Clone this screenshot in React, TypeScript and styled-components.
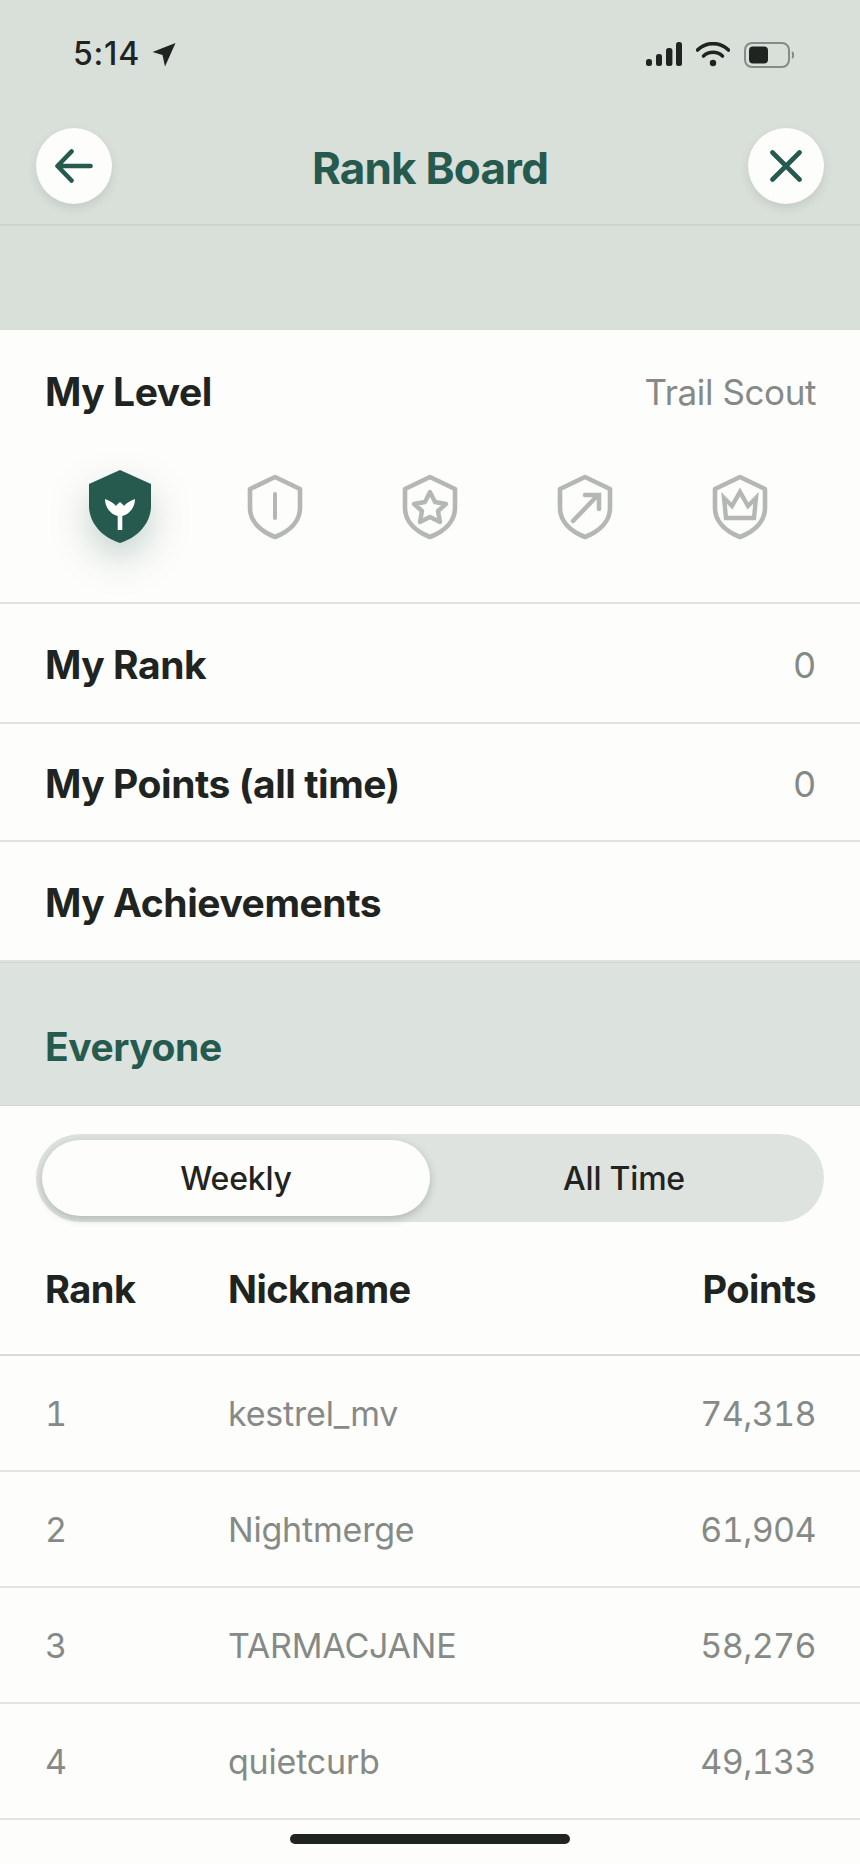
import React from "react";
import styled, { createGlobalStyle } from "styled-components";

const Global = createGlobalStyle`
  html, body { margin: 0; padding: 0; background: #fdfdfb; }
  * { box-sizing: border-box; }
  body { font-family: Inter, "Liberation Sans", sans-serif; }
`;
const Page = styled.div`
  width: 860px; height: 1864px; overflow: hidden; background: #fdfdfb; display: flex; flex-direction: column; color: #1f2421;
`;
const Top = styled.header`
  background: #d9e0da; height: 330px; flex: none;
`;
const StatusBar = styled.div`
  height: 108px; padding: 0 66px 0 73px; display: flex; justify-content: space-between; align-items: flex-start;
`;
const Time = styled.div`
  display: flex; align-items: center; gap: 12px; margin-top: 36px; font-size: 32px; line-height: 36px; font-weight: 500; letter-spacing: 0.8px;
`;
const StatusIcons = styled.div`
  display: flex; align-items: flex-start; gap: 14px; margin-top: 42px;
`;
const Nav = styled.div`
  height: 118px; padding: 20px 36px 0; display: flex; justify-content: space-between; align-items: flex-start; border-bottom: 2px solid #cdd4ce;
`;
const RoundButton = styled.button`
  width: 76px; height: 76px; border: 0; padding: 0; border-radius: 50%; background: #fdfdfc; display: flex; align-items: center; justify-content: center;
  box-shadow: 0 4px 10px rgba(40, 60, 50, 0.12);
`;
const Title = styled.h1`
  margin: 0; padding-top: 2px; font-size: 44px; line-height: 76px; font-weight: 700; letter-spacing: -0.8px; color: #265a4e;
`;
const LevelSection = styled.section`
  height: 274px; flex: none; border-bottom: 2px solid #dfe2df; padding: 0 44px 0 45px;
`;
const LevelHead = styled.div`
  height: 122px; display: flex; justify-content: space-between; align-items: center;
`;
const RowLabel = styled.div`
  font-size: 39px; font-weight: 700; letter-spacing: -0.45px;
`;
const LevelName = styled.div`
  padding-top: 2px; font-size: 35px; letter-spacing: -0.4px; color: #868a87;
`;
const Badges = styled.div`
  margin: 18px 0 0 -3px; display: flex;
`;
const Badge = styled.div`
  width: 155px; height: 74px; flex: none; display: flex; justify-content: center; align-items: center;
`;
const ActiveMark = styled.svg`
  filter: drop-shadow(0 16px 18px rgba(38, 90, 78, 0.26));
`;
const Row = styled.div<{ $h: number }>`
  height: ${(p) => p.$h}px; flex: none; padding: 3px 44px 0 45px; display: flex; justify-content: space-between; align-items: center; border-bottom: 2px solid #dfe2df;
`;
const RowValue = styled.div`
  font-size: 36px; color: #868a87;
`;
const Band = styled.div`
  height: 144px; flex: none; background: #dce2dd; display: flex; align-items: center; padding: 24px 45px 0; border-top: 1px solid #cfd5d0; border-bottom: 1px solid #cfd5d0;
`;
const BandTitle = styled.h2`
  margin: 0; font-size: 39px; font-weight: 700; letter-spacing: -0.45px; color: #265a4e;
`;
const ToggleWrap = styled.div`
  padding: 28px 36px 0; flex: none;
`;
const Toggle = styled.div`
  height: 88px; border-radius: 44px; background: #dfe3e0; padding: 6px; display: flex;
`;
const ToggleItem = styled.div<{ $on?: boolean }>`
  width: 388px; height: 76px; border-radius: 38px; flex: none; display: flex; align-items: center; justify-content: center;
  font-size: 32px; font-weight: 500; letter-spacing: -0.2px; color: #1f2421;
  background: ${(p) => (p.$on ? "#fdfdfc" : "transparent")};
  box-shadow: ${(p) => (p.$on ? "0 3px 8px rgba(30,40,35,0.24)" : "none")};
`;
const Columns = styled.div<{ $head?: boolean }>`
  display: grid; grid-template-columns: 183px 1fr auto; align-items: center; padding: 0 44px 0 45px; flex: none;
  height: ${(p) => (p.$head ? "134px" : "116px")};
  border-bottom: 2px solid ${(p) => (p.$head ? "#d8dbd8" : "#e2e4e2")};
`;
const HeadCell = styled.div`
  padding-top: 2px; font-size: 38px; font-weight: 700; letter-spacing: -0.5px; color: #1f2421;
`;
const Cell = styled.div`
  font-size: 34px; color: #868a87; font-weight: 400; letter-spacing: -0.2px; font-variant-numeric: tabular-nums;
`;
const PointsCell = styled(Cell)`
  letter-spacing: -0.6px;
`;
const Home = styled.div`
  width: 280px; height: 10px; border-radius: 5px; background: #1f2421; margin: 14px auto 0; flex: none;
`;

const green = "#265a4e";
const grey = "#b4b8b5";

const Shield = ({ children }: { children?: React.ReactNode }) => (
  <svg width="56" height="66" viewBox="0 0 56 66" fill="none">
    <path d="M28 3 L53 15 V34 C53 47 43 57 28 63 C13 57 3 47 3 34 V15 Z" stroke={grey} strokeWidth="4.6" strokeLinejoin="round" />
    {children}
  </svg>
);

const rows = [
  ["1", "kestrel_mv", "74,318"],
  ["2", "Nightmerge", "61,904"],
  ["3", "TARMACJANE", "58,276"],
  ["4", "quietcurb", "49,133"],
];

export default function App() {
  return (
    <Page>
      <Global />
      <Top>
        <StatusBar>
          <Time>
            5:14
            <svg width="24" height="25" viewBox="0 0 24 25"><path d="M23.5 1 L0.5 10 L10.5 13 L13 24.5 Z" fill="#1f2421" /></svg>
          </Time>
          <StatusIcons>
            <svg width="36" height="24" viewBox="0 0 36 24" fill="#1f2421">
              <rect x="0" y="17" width="6" height="7" rx="2.5" />
              <rect x="10" y="12" width="6" height="12" rx="2.5" />
              <rect x="20" y="6" width="6.4" height="18" rx="2.5" />
              <rect x="30" y="0" width="6" height="24" rx="2.5" />
            </svg>
            <svg width="34" height="25" viewBox="0 0 34 25" fill="none" stroke="#1f2421" strokeWidth="3.6" strokeLinecap="round">
              <path d="M1.5 8 C10 -0.5 24 -0.5 32.5 8" />
              <path d="M7.5 14 C13 9 21 9 26.5 14" />
              <circle cx="17" cy="21" r="3.2" fill="#1f2421" stroke="none" />
            </svg>
            <svg width="50" height="26" viewBox="0 0 50 26" fill="none">
              <rect x="1" y="1" width="44" height="24" rx="7" stroke="#858b87" strokeWidth="2" />
              <rect x="5" y="4.5" width="19" height="17" rx="4" fill="#1f2421" />
              <path d="M48 10 C49.5 11 49.5 15 48 16" stroke="#858b87" strokeWidth="2" />
            </svg>
          </StatusIcons>
        </StatusBar>
        <Nav>
          <RoundButton aria-label="Back">
            <svg width="38" height="34" viewBox="0 0 38 34" fill="none" stroke={green} strokeWidth="4.6" strokeLinecap="round" strokeLinejoin="round">
              <path d="M35.5 17 H3 M16.5 2.5 L2.5 17 L16.5 31.5" />
            </svg>
          </RoundButton>
          <Title>Rank Board</Title>
          <RoundButton aria-label="Close">
            <svg width="32" height="32" viewBox="0 0 32 32" fill="none" stroke={green} strokeWidth="4.6" strokeLinecap="round">
              <path d="M2.5 2.5 L29.5 29.5 M29.5 2.5 L2.5 29.5" />
            </svg>
          </RoundButton>
        </Nav>
      </Top>
      <LevelSection>
        <LevelHead>
          <RowLabel>My Level</RowLabel>
          <LevelName>Trail Scout</LevelName>
        </LevelHead>
        <Badges>
          <Badge>
            <ActiveMark width="62" height="74" viewBox="0 0 62 74">
              <path d="M31 0 L62 14 V36 C62 52 50 67 31 73 C12 67 0 52 0 36 V14 Z" fill={green} />
              <path d="M28.7 60 V46 C21 44 16 37 16 29 C21 31 25 33 27 36 C28 34 30 33 31 32 C32 33 34 34 35 36 C37 33 41 31 46 29 C46 37 41 44 33.3 46 V60 Z" fill="#fdfdfc" />
            </ActiveMark>
          </Badge>
          <Badge>
            <Shield><path d="M28 20 V44" stroke={grey} strokeWidth="4" strokeLinecap="round" /></Shield>
          </Badge>
          <Badge>
            <Shield>
              <path d="M28 18 L33 28 L44 30 L36 37 L38 48 L28 43 L18 48 L20 37 L12 30 L23 28 Z" stroke={grey} strokeWidth="4.4" strokeLinejoin="round" />
            </Shield>
          </Badge>
          <Badge>
            <Shield>
              <path d="M16 47 L40 22 M28 21 H42 V35" stroke={grey} strokeWidth="4.5" strokeLinecap="round" />
            </Shield>
          </Badge>
          <Badge>
            <Shield>
              <path d="M12 24 L20 32 L28 18 L36 32 L44 24 L42 44 H14 Z" stroke={grey} strokeWidth="4.4" strokeLinejoin="miter" />
            </Shield>
          </Badge>
        </Badges>
      </LevelSection>
      <Row $h={120}><RowLabel>My Rank</RowLabel><RowValue>0</RowValue></Row>
      <Row $h={118}><RowLabel>My Points (all time)</RowLabel><RowValue>0</RowValue></Row>
      <Row $h={120}><RowLabel>My Achievements</RowLabel></Row>
      <Band><BandTitle>Everyone</BandTitle></Band>
      <ToggleWrap>
        <Toggle>
          <ToggleItem $on>Weekly</ToggleItem>
          <ToggleItem>All Time</ToggleItem>
        </Toggle>
      </ToggleWrap>
      <Columns $head>
        <HeadCell>Rank</HeadCell>
        <HeadCell>Nickname</HeadCell>
        <HeadCell>Points</HeadCell>
      </Columns>
      {rows.map((r) => (
        <Columns key={r[0]}>
          <Cell>{r[0]}</Cell>
          <Cell>{r[1]}</Cell>
          <PointsCell>{r[2]}</PointsCell>
        </Columns>
      ))}
      <Home />
    </Page>
  );
}
